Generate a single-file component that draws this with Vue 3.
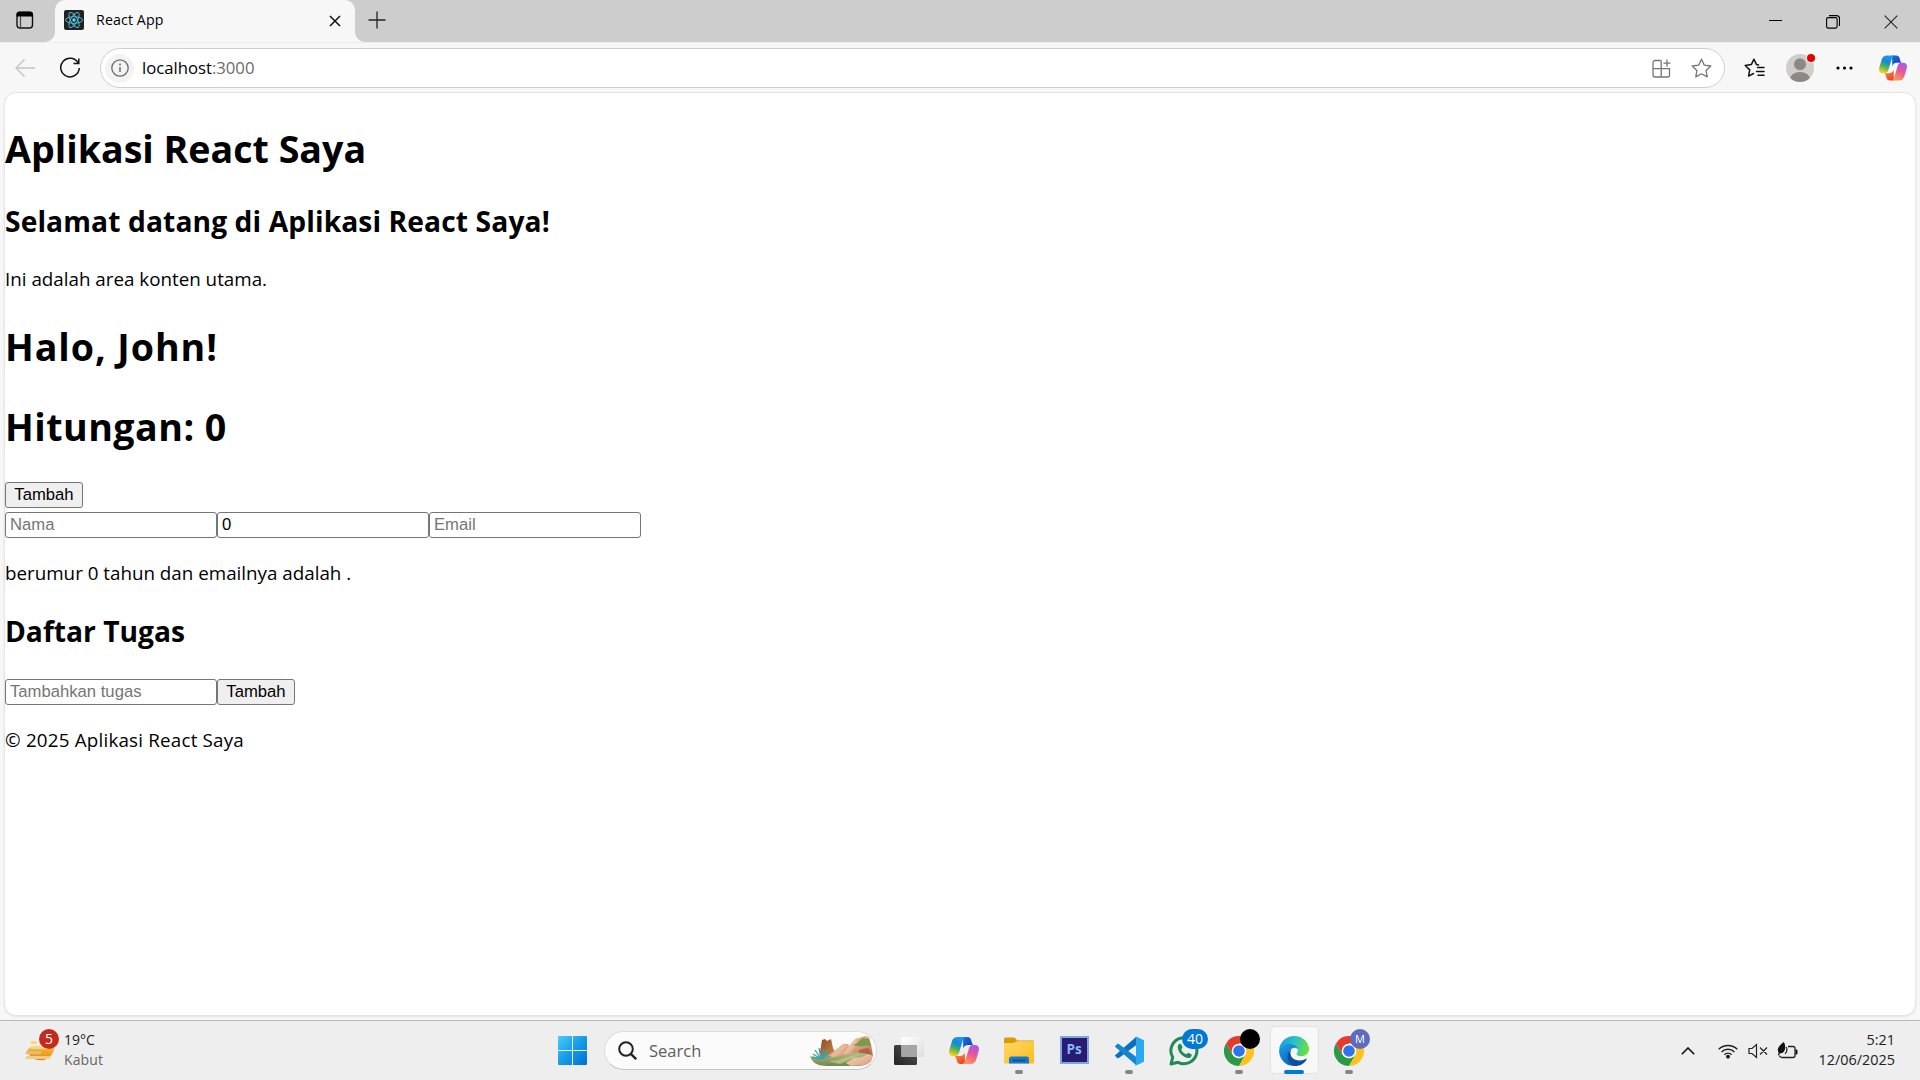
<script setup>
import { ref } from 'vue'

const nama = ref('')
const umur = ref(0)
const email = ref('')
const tugas = ref('')
const hitungan = ref(0)
</script>

<template>
  <div class="screen">
    <svg class="defs" width="0" height="0">
      <defs>
        <linearGradient id="cpBlue" x1="0.6" y1="0" x2="0.25" y2="1">
          <stop offset="0" stop-color="#1b9bf0" />
          <stop offset="0.35" stop-color="#1488d8" />
          <stop offset="0.6" stop-color="#3fae6c" />
          <stop offset="0.95" stop-color="#f4cf14" />
        </linearGradient>
        <linearGradient id="cpPink" x1="0.7" y1="0" x2="0.3" y2="1">
          <stop offset="0" stop-color="#a45cf0" />
          <stop offset="0.45" stop-color="#e8559a" />
          <stop offset="1" stop-color="#ff9a50" />
        </linearGradient>
        <linearGradient id="cpDark" x1="0" y1="0" x2="1" y2="1">
          <stop offset="0" stop-color="#1470e0" />
          <stop offset="1" stop-color="#1a37b8" />
        </linearGradient>
        <linearGradient id="cpRed" x1="0" y1="0" x2="0.6" y2="1">
          <stop offset="0" stop-color="#ff9a3c" />
          <stop offset="1" stop-color="#e8482f" />
        </linearGradient>
        <symbol id="copilot" viewBox="0 0 30 27">
          <path d="M14 0h4.500c2 0 2.900 1 3.500 2.700l1 3.300c.5 1.500 1 2 2.200 2h-6.200c-2.500 0-4 1.300-4.700 3.500z" fill="url(#cpDark)" />
          <path d="M16 27h-4.500c-2 0-2.900-1-3.500-2.700l-1-3.300c-.5-1.300-1-2-2.200-2h6.200c2.500 0 4-1.300 4.700-3.500z" fill="url(#cpRed)" />
          <path d="M8.500 0h8.200c-1.800.6-2.500 2-3.200 4.200l-3.400 11.300c-.8 2.500-2 3.500-4.300 3.500h-1.800c-3.300 0-4.600-2.500-3.700-6l2.700-9C4 1.400 5.600 0 8.500 0z" fill="url(#cpBlue)" />
          <path d="M21.500 27h-8.200c1.800-.6 2.500-2 3.200-4.200l3.400-11.300C20.700 9 21.900 8 24.200 8H26c3.300 0 4.600 2.500 3.700 6l-2.700 9c-1 2.600-2.600 4-5.500 4z" fill="url(#cpPink)" />
        </symbol>
        <symbol id="chrome" viewBox="0 0 30 30">
          <path d="M15 30A15 15 0 0 1 2 7.500L8.500 18.700 15 22.500l6.500-3.800z" fill="#2a9a47" />
          <path d="M15 7.500H28A15 15 0 0 0 2 7.500L8.500 18.700z" fill="#e33b2e" />
          <path d="M15 7.500H28A15 15 0 0 1 15 30L21.500 18.700z" fill="#fcc31e" />
          <circle cx="15" cy="15" r="7.300" fill="#fff" />
          <circle cx="15" cy="15" r="5.800" fill="#2f74e8" />
        </symbol>
      </defs>
    </svg>

    <header class="strip">
      <div class="strip-left">
        <svg width="20" height="20" viewBox="0 0 20 20">
          <rect x="2" y="2.500" width="15.500" height="15.500" rx="3" fill="none" stroke="#111" stroke-width="1.400" />
          <path d="M1.500 6.500V4.500a3 3 0 0 1 3-3h10.500a3 3 0 0 1 3 3v2z" fill="#000" />
          <path d="M5.500 6v12" stroke="#444" stroke-width="1.200" />
        </svg>
      </div>
      <div class="tab-wrap">
        <div class="tab">
          <svg width="20" height="20" viewBox="0 0 20 20">
            <rect width="20" height="20" rx="2" fill="#222" />
            <g fill="none" stroke="#53b9d3" stroke-width="1">
              <ellipse cx="10" cy="10" rx="8.500" ry="3.300" />
              <ellipse cx="10" cy="10" rx="8.500" ry="3.300" transform="rotate(60 10 10)" />
              <ellipse cx="10" cy="10" rx="8.500" ry="3.300" transform="rotate(120 10 10)" />
            </g>
            <circle cx="10" cy="10" r="1.700" fill="#61dafb" />
          </svg>
          <span class="tab-title">React App</span>
          <svg class="tab-x" width="12" height="12" viewBox="0 0 12 12"><path d="M1 1l10 10M11 1L1 11" stroke="#111" stroke-width="1.500" /></svg>
        </div>
      </div>
      <div class="strip-right">
        <svg width="18" height="18" viewBox="0 0 18 18"><path d="M9 0.500v17M0.500 9h17" stroke="#222" stroke-width="1.300" /></svg>
        <div class="win-btns">
          <svg width="13" height="14" viewBox="0 0 13 14"><path d="M0 5.500h13" stroke="#000" /></svg>
          <svg width="14" height="14" viewBox="0 0 14 14" fill="none" stroke="#000" stroke-width="1.100">
            <rect x=".6" y="2.600" width="10.500" height="10.500" rx="1.500" />
            <path d="M3 .6h7.500a3 3 0 0 1 3 3V11" />
          </svg>
          <svg width="14" height="14" viewBox="0 0 14 14"><path d="M.7.700l12.600 12.600M13.300.700L.7 13.300" stroke="#222" stroke-width="1.100" /></svg>
        </div>
      </div>
    </header>

    <div class="toolbar">
      <svg class="back" width="20" height="18" viewBox="0 0 20 18" fill="none" stroke="#c4c4c4" stroke-width="1.300"><path d="M20 9H1M9.500.500L1 9l8.500 8.500" /></svg>
      <svg class="reload" width="22" height="22" viewBox="0 0 22 22" fill="none" stroke="#111" stroke-width="1.500"><path d="M19.300 6.300A9.300 9.300 0 1 0 20.300 11" /><path d="M19.800 1.500v5h-5.300" /></svg>
      <div class="address">
        <span class="info">
          <svg width="18" height="18" viewBox="0 0 18 18"><circle cx="9" cy="9" r="8.200" fill="none" stroke="#6b6b6b" stroke-width="1.300" /><path d="M9 8v5" stroke="#6b6b6b" stroke-width="1.500" /><circle cx="9" cy="5.500" r="1" fill="#6b6b6b" /></svg>
        </span>
        <span class="url">localhost<i>:3000</i></span>
        <svg class="apps" width="19" height="19" viewBox="0 0 19 19" fill="none" stroke="#767676" stroke-width="1.300"><path d="M9 1.500H3a2 2 0 0 0-2 2V16a2 2 0 0 0 2 2h12.500a2 2 0 0 0 2-2V9.700H1M9.200 1.500V18M11.500 4.200h7M15 .5v7.300" /></svg>
        <svg width="21" height="20" viewBox="0 0 21 20" fill="none" stroke="#767676" stroke-width="1.300" stroke-linejoin="round"><path d="M10.500 1.200l2.800 5.900 6.500.9-4.700 4.500 1.100 6.400-5.700-3.100-5.700 3.100 1.100-6.400L1.200 8l6.500-.9z" /></svg>
      </div>
      <svg class="favs" width="21" height="20" viewBox="0 0 21 20" fill="none" stroke="#111" stroke-width="1.500" stroke-linejoin="round" stroke-linecap="round"><path d="M14.500 7l-2-.4L10 1.200 7.300 6.600 1.200 7.500l4.500 4.400-1.100 6.200 4.900-2.600M13.500 9.500h6.500M12.500 13.500H20M14 17.200h6" /></svg>
      <svg class="avatar" width="30" height="30" viewBox="0 0 30 30">
        <clipPath id="av"><circle cx="15" cy="15" r="14" /></clipPath>
        <circle cx="15" cy="15" r="14" fill="#d0cecb" />
        <g clip-path="url(#av)" fill="#8c8884"><circle cx="15" cy="11.300" r="6" /><ellipse cx="15" cy="26" rx="10" ry="7" /></g>
        <circle cx="26" cy="5" r="4.800" fill="#f7f7f7" /><circle cx="26" cy="5" r="4" fill="#e50000" />
      </svg>
      <svg class="dots" width="18" height="4" viewBox="0 0 18 4"><circle cx="2" cy="2" r="1.600" /><circle cx="8.500" cy="2" r="1.600" /><circle cx="15" cy="2" r="1.600" /></svg>
      <svg class="cop" width="28" height="26"><use href="#copilot" /></svg>
    </div>

    <main class="page">
      <h1 class="title">Aplikasi React Saya</h1>
      <h2 class="welcome">Selamat datang di Aplikasi React Saya!</h2>
      <p>Ini adalah area konten utama.</p>
      <h1 class="hello">Halo, John!</h1>
      <h1 class="count">Hitungan: {{ hitungan }}</h1>
      <div class="row counter"><button @click="hitungan++">Tambah</button></div>
      <div class="row form">
        <input v-model="nama" type="text" placeholder="Nama" />
        <input v-model="umur" type="text" placeholder="Umur" />
        <input v-model="email" type="text" placeholder="Email" />
      </div>
      <p class="bio">{{ nama }} berumur {{ umur }} tahun dan emailnya adalah {{ email }}.</p>
      <h2 class="tasks">Daftar Tugas</h2>
      <div class="row todo">
        <input v-model="tugas" type="text" placeholder="Tambahkan tugas" />
        <button>Tambah</button>
      </div>
      <p class="foot">© 2025 Aplikasi React Saya</p>
    </main>

    <footer class="taskbar">
      <div class="weather">
        <svg width="36" height="38" viewBox="0 0 36 38">
          <defs><linearGradient id="sun" x1="0" y1="0" x2="0" y2="1"><stop offset="0" stop-color="#fbc02d" /><stop offset="1" stop-color="#f07818" /></linearGradient></defs>
          <path d="M2 22.500a14 14 0 0 0 27-1l0-3H6z" fill="url(#sun)" />
          <g stroke-linecap="round" stroke-width="3" fill="none">
            <path d="M7 14.500h3.500" stroke="#fbd978" /><path d="M7 19.500h16" stroke="#f5d885" /><path d="M2 24.800h13" stroke="#d9c37c" /><path d="M18 24.800h6" stroke="#e8a52c" /><path d="M2 29.500h22" stroke="#ecd08a" />
          </g>
          <circle cx="24" cy="11" r="10" fill="#c42b1c" />
          <text x="24" y="16" text-anchor="middle" class="badge-num">5</text>
        </svg>
        <div class="w-text"><div>19°C</div><div class="dim">Kabut</div></div>
      </div>

      <svg class="start" width="29" height="29" viewBox="0 0 29 29">
        <defs><linearGradient id="win" x1="0" y1="0" x2="1" y2="1"><stop offset="0" stop-color="#4bcbff" /><stop offset=".5" stop-color="#169be6" /><stop offset="1" stop-color="#0070d0" /></linearGradient></defs>
        <path d="M1 0H14V14H0V1a1 1 0 0 1 1-1zM15 0H28a1 1 0 0 1 1 1V14H15zM0 15H14V29H1a1 1 0 0 1-1-1zM15 15H29V28a1 1 0 0 1-1 1H15z" fill="url(#win)" />
      </svg>
      <div class="search">
        <svg width="19" height="19" viewBox="0 0 19 19" fill="none" stroke="#222" stroke-width="2"><circle cx="8" cy="8" r="6.800" /><path d="M12.800 12.800l5.400 5.400" stroke-width="2.400" /></svg>
        <span class="s-text">Search</span>
        <svg class="scene" width="64" height="30" viewBox="0 0 64 30">
          <defs>
            <linearGradient id="rk" x1="0" y1="0" x2="1" y2="1"><stop offset="0" stop-color="#f3cfae" /><stop offset=".55" stop-color="#dba37d" /><stop offset="1" stop-color="#a8563f" /></linearGradient>
            <linearGradient id="rl" x1="0" y1="0" x2="1" y2="1"><stop offset="0" stop-color="#f8dcc4" /><stop offset="1" stop-color="#d79a78" /></linearGradient>
            <linearGradient id="rk2" x1="0" y1="0" x2="1" y2="1"><stop offset="0" stop-color="#8c4a2c" /><stop offset="1" stop-color="#d99242" /></linearGradient>
            <linearGradient id="gr" x1="0" y1="0" x2="0" y2="1"><stop offset="0" stop-color="#b5bd7c" /><stop offset="1" stop-color="#6f8750" /></linearGradient>
          </defs>
          <path d="M10 16l2-12 3-1 2 2 4-2 2 9 4 8-16 2z" fill="url(#rk2)" />
          <path d="M16 21l11-8 6-5 5 0 3 4 4-9 10-3 4 1 2 7 2 12-30 4z" fill="url(#rk)" />
          <path d="M17 22l12-9 5-4 2 1-5 8-9 5z" fill="url(#rl)" />
          <path d="M33 18l6-8 5-6 4 1-3 6-6 8z" fill="url(#rl)" />
          <path d="M43 9c5-1 6-5 10-7l6 1 2 7c-6-2-10 2-18-1z" fill="#7a9a4c" />
          <path d="M49 14l9-2 4 8-12 1z" fill="#a8543e" opacity=".7" />
          <path d="M0 20c8 4 14 1 22 1 10 0 16-5 28-4 6 0 10 2 13 2l-3 7c-4 3-8 4-14 4H18C8 30 2 27 0 20z" fill="url(#gr)" />
          <path d="M18 25c12 1 18-6 32-6l-20 9z" fill="#c9cb90" opacity=".7" />
          <path d="M36 27l8-5 8-1 6-3 5 2-2 6-6 3-14 1z" fill="url(#rl)" />
          <path d="M11 23L3 18M11 23L5 14M11 23L9 12M11 23L14 13M12 23L19 15M12 23L21 20M11 23L2 21M12 23l5-9" stroke="#3ba3ad" stroke-width="1.300" />
        </svg>
      </div>

      <div class="apps-row">
        <div class="app">
          <svg width="30" height="28" viewBox="0 0 30 28">
            <defs><linearGradient id="tvd" x1="0" y1="1" x2="1" y2="0"><stop offset="0" stop-color="#222" /><stop offset="1" stop-color="#555" /></linearGradient><linearGradient id="tvl" x1="0" y1="0" x2="1" y2="1"><stop offset="0" stop-color="#fff" /><stop offset="1" stop-color="#ddd" /></linearGradient></defs>
            <rect y="8" width="23" height="20" rx="1.500" fill="url(#tvd)" /><rect x="7.500" width="22.500" height="20" rx="1.500" fill="url(#tvl)" /><path d="M7.500 8H23v12H7.500z" fill="#a5a5a5" />
          </svg>
        </div>
        <div class="app"><svg width="30" height="27"><use href="#copilot" /></svg></div>
        <div class="app">
          <svg width="30" height="27" viewBox="0 0 30 27">
            <defs><linearGradient id="fo" x1="0" y1="0" x2="1" y2="1"><stop offset="0" stop-color="#ffd968" /><stop offset="1" stop-color="#fbbb1c" /></linearGradient></defs>
            <path d="M0 2a1.500 1.500 0 0 1 1.500-1.500h9L13.500 3.500H29a1 1 0 0 1 1 1V10H0z" fill="#dc9a0a" />
            <path d="M0 6h9.500l3-1.800H30V25.500a1 1 0 0 1-1 1H1a1 1 0 0 1-1-1z" fill="url(#fo)" />
            <path d="M5 26.500V22a2.500 2.500 0 0 1 2.500-2.500h15A2.500 2.500 0 0 1 25 22v4.500z" fill="#1478cc" /><path d="M9 23.500h12" stroke="#0a4a90" stroke-width="1.300" stroke-linecap="round" />
          </svg>
          <i class="run"></i>
        </div>
        <div class="app ps"><span>Ps</span></div>
        <div class="app">
          <svg width="30" height="30" viewBox="0 0 30 30">
            <path d="M.8 19.500l2.500 2.700 1.500-.1L22 9.200V1z" fill="#0a70bd" />
            <path d="M.8 10.500l2.500-2.700 1.500.1L22 20.800V29z" fill="#1486d0" />
            <path d="M22 .6L29 3.700c.6.300 1 .8 1 1.500v19.600c0 .7-.4 1.200-1 1.500l-7 3.100c-.7.300-1.300 0-1.700-.4.900.5 1.700.1 1.700-.9V1.900c0-1-.8-1.400-1.700-.9.400-.4 1-.7 1.700-.4z" fill="#2aa9f0" />
          </svg>
          <i class="run"></i>
        </div>
        <div class="app">
          <svg width="30" height="30" viewBox="0 0 30 30">
            <path d="M2 28l1.700-6.700A13 13 0 1 1 9 26.300z" fill="none" stroke="#1f8c57" stroke-width="3" stroke-linejoin="round" />
            <path d="M9.500 8.500c1-1.200 2.300-1 2.800 0l1.200 2.800c.2.700-1.200 1.900-1.200 2.400.8 2 2.700 3.700 4.900 4.600.6.100 1.600-1.700 2.200-1.600l3 1.500c.7.500 0 2.500-1 3.200-2.400 1.500-5.500.1-8.300-2.100C9.600 16 7.500 11.500 9.500 8.500z" fill="#1f8c57" />
          </svg>
          <b class="badge wa">40</b>
        </div>
        <div class="app"><svg width="30" height="30"><use href="#chrome" /></svg><b class="badge blob"></b><i class="run"></i></div>
        <div class="app active">
          <svg width="30" height="30" viewBox="0 0 30 30">
            <defs>
              <linearGradient id="e1" x1="0" y1="0.300" x2="1" y2="0.500"><stop offset="0" stop-color="#1b9de2" /><stop offset=".5" stop-color="#2cc0c8" /><stop offset="1" stop-color="#6be33c" /></linearGradient>
              <linearGradient id="e2" x1="0" y1="0" x2="0.600" y2="1"><stop offset="0" stop-color="#1ca2ea" /><stop offset="1" stop-color="#0a62b8" /></linearGradient>
            </defs>
            <path d="M.2 13.500C1 5.500 7.500 0 15 0c9 0 15 6.500 15 12.800 0 4.700-3.700 7.500-7.500 7.500-3.500 0-5-1.300-5-2.200 0-.8 1.400-1.300 1.400-3.800 0-3.300-3.700-6.300-8.700-6.300C5.500 8 1.500 10.500.2 13.500z" fill="url(#e1)" />
            <path d="M.1 14.500C.8 10 5 7.700 10 7.700c5.200 0 8.800 3 9 6-1-1.700-2.700-2.200-4-2-4 .8-6 4.500-5.500 8.500C10 25 13 29 18 29.700A15 15 0 0 1 .1 14.500z" fill="url(#e2)" />
            <path d="M12.500 13.200c-2.500 3.800-1 10.500 7.500 11.300 3 .2 5.500-.8 7-1.700.6-.3 1 .2.700.7C25 28 20.500 30 16.500 30c-5-1-8-5-8-9.500 0-3.300 1.500-6 4-7.300z" fill="#114f9c" />
          </svg>
          <i class="run on"></i>
        </div>
        <div class="app"><svg width="30" height="30"><use href="#chrome" /></svg><b class="badge m">M</b><i class="run"></i></div>
      </div>

      <div class="tray">
        <svg class="chev" width="14" height="8" viewBox="0 0 14 8" fill="none" stroke="#111" stroke-width="1.600"><path d="M.8 7.200L7 1l6.200 6.200" /></svg>
        <svg class="wifi" width="20" height="16" viewBox="0 0 20 16" fill="none" stroke="#222" stroke-width="1.500"><path d="M.7 6.300a13 13 0 0 1 18.600 0M3.600 9a9 9 0 0 1 12.800 0M6.400 11.700a5.200 5.200 0 0 1 7.200 0" /><circle cx="10" cy="13.700" r="1.900" fill="#111" stroke="none" /></svg>
        <svg class="vol" width="20" height="16" viewBox="0 0 20 16" fill="none" stroke="#222" stroke-width="1.200"><path d="M1 5.500v5h3l4.500 4V1.500L4 5.500zM12 4.500l7 7M19 4.500l-7 7" /></svg>
        <svg class="bat" width="21" height="18" viewBox="0 0 21 18"><path d="M11 4.500h5a2 2 0 0 1 2 2v7a2 2 0 0 1-2 2H5c-1.500 0-2.500-1-2.500-2" fill="none" stroke="#222" stroke-width="1.300" /><path d="M18.500 7.500h1a1 1 0 0 1 1 1v3a1 1 0 0 1-1 1h-1z" fill="#111" /><path d="M6.800 0c2 3.500 2.200 8-1 10.800l-2.800.7-1.500 2-.8-.8L1.800 11C-1 6.500 2.500 3.500 6.800 0z" fill="#111" /><path d="M9.300 5c1.300 2.500.5 5-1.300 7" stroke="#111" stroke-width="1.100" fill="none" /></svg>
        <div class="clock"><div>5:21</div><div>12/06/2025</div></div>
      </div>
    </footer>
  </div>
</template>

<style>
body { margin: 0; background: #f7f7f7; overflow: hidden; }
</style>

<style scoped>
.screen { width: 1920px; height: 1080px; display: flex; flex-direction: column; background: #f7f7f7; font-family: "Open Sans", "Noto Sans", sans-serif; color: #000; overflow: hidden; position: relative; }
svg { display: block; flex: none; }
.defs { position: absolute; }
.strip { height: 42px; display: flex; flex: none; }
.strip-left { width: 55px; background: #cdcdcd; border-bottom-right-radius: 10px; box-sizing: border-box; padding: 10px 0 0 15px; }
.tab-wrap { width: 300px; background: linear-gradient(#cdcdcd 20px, #f7f7f7 20px); }
.tab { height: 42px; background: #f7f7f7; border-radius: 10px 10px 0 0; display: flex; align-items: center; padding: 0 14px 2px 9px; box-sizing: border-box; }
.tab-title { font-size: 14.200px; letter-spacing: .12px; margin-left: 12px; padding-bottom: 2px; flex: 1; }
.tab-x { margin-top: 1px; }
.strip-right { flex: 1; background: #cdcdcd; border-bottom-left-radius: 10px; display: flex; justify-content: space-between; padding: 11px 22px 0 13px; }
.win-btns { display: flex; gap: 44px; padding-top: 4px; }
.toolbar { height: 50px; flex: none; display: flex; align-items: center; padding: 1px 12px 0 15px; box-sizing: border-box; border-top: 1px solid #ebebeb; }
.reload { margin-left: 24px; }
.address { margin-left: 19px; width: 1625px; height: 40px; box-sizing: border-box; border: 1px solid #cfcfcf; border-radius: 20px; background: #fff; display: flex; align-items: center; padding: 0 12px 0 4px; }
.info { width: 29px; height: 29px; border-radius: 50%; background: #f3f3f3; display: flex; align-items: center; justify-content: center; }
.url { font-size: 16.700px; margin-left: 8px; padding-bottom: 2px; flex: 1; }
.url i { font-style: normal; color: #6b6b6b; }
.apps { margin-right: 20px; }
.favs { margin-left: 19px; }
.avatar { margin-left: 20px; }
.dots { margin-left: 21px; }
.cop { margin-left: 25px; }
.page { height: 924px; flex: none; box-sizing: border-box; margin: 0 4px; border: 1px solid #e4e4e4; border-radius: 12px; background: #fff; box-shadow: 0 1px 2px rgba(0,0,0,.08); }
h1, h2, p { margin: 0; white-space: nowrap; }
h1 { font-size: 37.600px; line-height: 53px; margin-top: 27px; }
h2 { font-size: 28.200px; line-height: 40px; margin-top: 26px; }
p { font-size: 18.800px; line-height: 27px; margin-top: 25px; }
.title { margin-top: 29px; }
.welcome { letter-spacing: .11px; }
.hello { letter-spacing: .95px; }
.count { letter-spacing: .48px; }
.row { display: flex; }
button, input { height: 26px; box-sizing: border-box; border: 1px solid #767676; border-radius: 3px; font: 16.667px "Liberation Sans", Arial, sans-serif; color: #000; margin: 0; }
button { width: 78px; background: #efefef; padding: 0; }
input { width: 212px; padding: 0 4px; background: #fff; }
input::placeholder { color: #757575; }
.counter { margin-top: 29px; }
.form { margin-top: 4px; }
.bio { margin-top: 22px; }
.tasks { margin-top: 24px; }
.todo { margin-top: 28px; }
.foot { margin-top: 22px; letter-spacing: .2px; }
.taskbar { margin-top: 4px; height: 60px; flex: none; border-top: 1px solid #b9b9b9; box-sizing: border-box; background: #eee; display: flex; align-items: center; }
.weather { width: 533px; margin-left: 25px; display: flex; }
.weather svg { margin-top: -3px; }
.badge-num { font: 14px "Open Sans", sans-serif; fill: #fff; }
.w-text { margin: -1px 0 1px 3px; font-size: 14px; line-height: 20px; color: #222; }
.dim { color: #666; letter-spacing: .1px; }
.search { margin-left: 17px; width: 273px; height: 39px; box-sizing: border-box; border: 1px solid #ddd; border-bottom-color: #c4c4c4; border-radius: 20px; background: #fbfbfb; display: flex; align-items: center; padding: 0 2px 0 13px; }
.s-text { margin-left: 12px; flex: 1; font-size: 16.500px; color: #5c5c5c; }
.apps-row { display: flex; margin-left: 4.500px; }
.app { width: 55px; height: 59px; display: flex; align-items: center; justify-content: center; position: relative; }
.active::before { content: ""; position: absolute; inset: 5px 3px 6px 3px; background: #f8f8f8; border: 1px solid #e2e2e2; border-radius: 5px; box-sizing: border-box; }
.active svg { position: relative; }
.run { position: absolute; left: 23.500px; top: 49px; width: 8px; height: 4px; border-radius: 2px; background: #858585; }
.run.on { left: 17.500px; width: 20px; background: #0078d4; }
.ps span { width: 29px; height: 28px; margin-bottom: 2px; box-sizing: border-box; border: 2px solid #7fa9de; background: #281d70; color: #85baff; font: bold 13.500px/22px "Open Sans", sans-serif; text-align: center; }
.badge { position: absolute; left: 28.500px; top: 8px; height: 20px; border-radius: 10px; color: #fff; text-align: center; }
.wa { left: 25.500px; width: 26px; background: #0078d4; font: 14px/20px "Open Sans", sans-serif; }
.blob { width: 20px; background: #000; }
.m { width: 20px; background: #5c6bc0; font: 11px/20px "Open Sans", sans-serif; }
.tray { flex: 1; display: flex; align-items: center; padding-right: 25px; justify-content: flex-end; }
.wifi { margin-left: 23px; }
.vol { margin-left: 10px; }
.bat { margin-left: 9px; }
.clock { width: 97px; margin-top: -2px; text-align: right; font-size: 14.400px; line-height: 20px; color: #222; white-space: nowrap; }
</style>
